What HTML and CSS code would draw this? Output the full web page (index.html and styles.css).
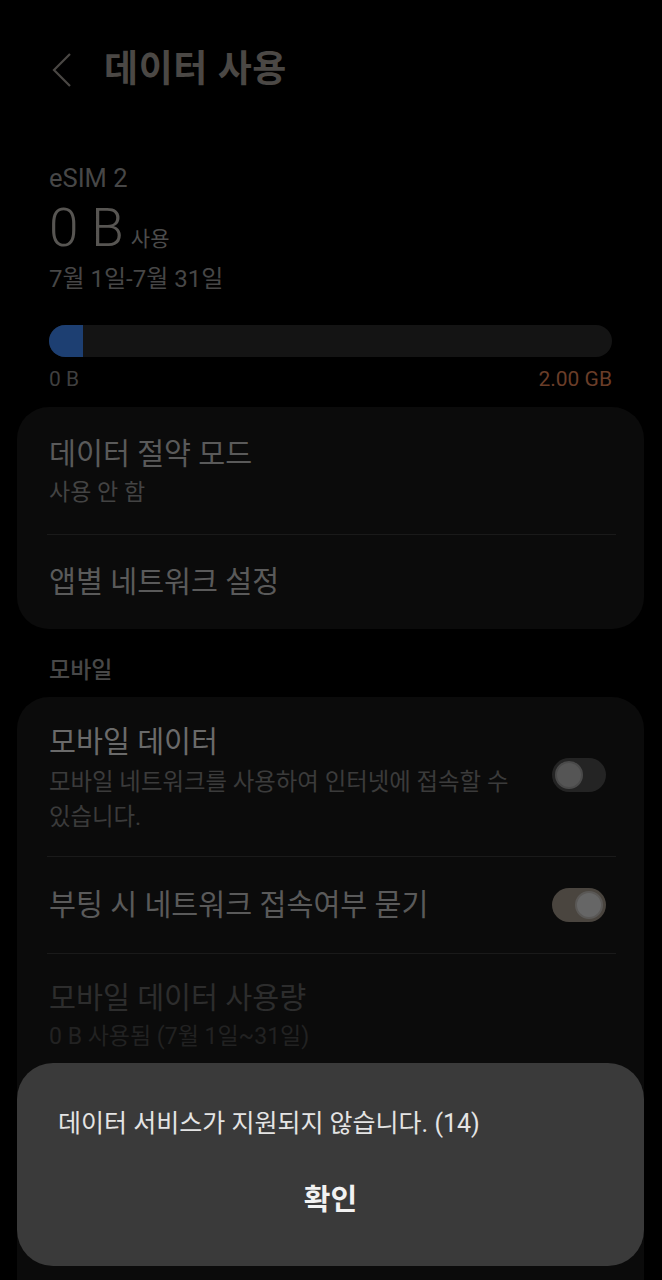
FILE: index.html
```html
<!DOCTYPE html>
<html lang="ko">
<head>
<meta charset="utf-8">
<title>데이터 사용</title>
<link rel="stylesheet" href="styles.css">
</head>
<body>
<div class="screen">
  <header class="appbar">
    <svg class="back" width="24" height="36" viewBox="0 0 24 36">
      <polyline points="19,2 3,18 19,34" fill="none" stroke="#4a4744" stroke-width="2.2" stroke-linejoin="miter"/>
    </svg>
    <h1 class="title">데이터 사용</h1>
  </header>

  <section class="usage">
    <div class="esim">eSIM 2</div>
    <div class="total"><span class="total-num">0 B</span><span class="total-unit">사용</span></div>
    <div class="period">7월 1일-7월 31일</div>
    <div class="bar"><div class="bar-fill" style="width: 34px"></div></div>
    <div class="bar-labels"><span>0 B</span><span class="limit">2.00 GB</span></div>
  </section>

  <section class="card">
    <div class="item item-first">
      <div class="item-title">데이터 절약 모드</div>
      <div class="item-sub">사용 안 함</div>
    </div>
    <div class="divider"></div>
    <div class="item item-single">
      <div class="item-title">앱별 네트워크 설정</div>
    </div>
  </section>

  <div class="section-label">모바일</div>

  <section class="card card-mobile">
    <div class="item item-toggle item-mdata">
      <div class="item-text">
        <div class="item-title bright">모바일 데이터</div>
        <div class="item-desc">모바일 네트워크를 사용하여 인터넷에 접속할 수 있습니다.</div>
      </div>
      <div class="switch switch-off"><span class="knob"></span></div>
    </div>
    <div class="divider"></div>
    <div class="item item-toggle item-boot">
      <div class="item-text">
        <div class="item-title">부팅 시 네트워크 접속여부 묻기</div>
      </div>
      <div class="switch switch-on"><span class="knob"></span></div>
    </div>
    <div class="divider"></div>
    <div class="item item-usage">
      <div class="item-title disabled">모바일 데이터 사용량</div>
      <div class="item-sub disabled-sub">0 B 사용됨 (7월 1일~31일)</div>
    </div>
  </section>
</div>

<div class="dialog">
  <p class="dialog-msg">데이터 서비스가 지원되지 않습니다. (14)</p>
  <div class="dialog-btn">확인</div>
</div>
</body>
</html>
```

FILE: styles.css
```css
* { box-sizing: border-box; }
html, body {
  margin: 0;
  padding: 0;
  background: #000;
}
body {
  font-family: "Roboto", "Noto Sans CJK KR", sans-serif;
  width: 662px;
  height: 1280px;
  overflow: hidden;
}
.screen {
  padding: 0 18px 0 17px;
}
.appbar {
  height: 140px;
  display: flex;
  align-items: center;
  padding-left: 34px;
}
.back {
  display: block;
}
.title {
  margin: 0 0 0 29px;
  font-size: 37px;
  line-height: 48px;
  font-weight: 700;
  color: #4b4845;
  letter-spacing: 0.6px;
}
.usage {
  padding: 23px 32px 0 32px;
}
.esim {
  font-size: 25.5px;
  line-height: 30px;
  color: #474747;
}
.total {
  margin-top: 7px;
  height: 56px;
  display: flex;
  align-items: baseline;
  color: #575552;
}
.total-num {
  font-size: 53px;
  line-height: 56px;
  font-weight: 300;
}
.total-unit {
  font-size: 21px;
  line-height: 24px;
  margin-left: 7px;
  color: #4c4c4c;
}
.period {
  margin-top: 7px;
  font-size: 24px;
  line-height: 32px;
  color: #474747;
}
.bar {
  margin-top: 30px;
  height: 32px;
  border-radius: 16px;
  background: #141414;
  overflow: hidden;
}
.bar-fill {
  height: 100%;
  background: #1d3f72;
}
.bar-labels {
  margin-top: 9px;
  display: flex;
  justify-content: space-between;
  font-size: 21px;
  line-height: 26px;
  color: #3f3f3f;
}
.limit { color: #6a3d28; }

.card {
  margin-top: 15px;
  background: #0b0b0b;
  border-radius: 32px;
}
.item {
  padding: 0 32px;
}
.item-first {
  padding-top: 29px;
  height: 127px;
}
.item-single {
  padding-top: 29px;
  height: 94px;
}
.item-title {
  font-size: 29.3px;
  line-height: 36px;
  color: #5a5a5a;
}
.item-sub {
  margin-top: 6px;
  font-size: 23px;
  line-height: 30px;
  color: #434343;
}
.divider {
  height: 1px;
  background: #1a1a1a;
  margin: 0 28px 0 30px;
}
.section-label {
  margin-top: 27px;
  padding-left: 32px;
  font-size: 23px;
  line-height: 30px;
  font-weight: 500;
  color: #484848;
}
.card-mobile {
  margin-top: 11px;
  padding-bottom: 228px;
  border-radius: 32px 32px 0 0;
}
.item-toggle {
  display: flex;
  align-items: center;
  justify-content: space-between;
  padding-right: 38px;
}
.item-text { flex: 1; }
.item-mdata {
  padding-top: 27px;
  height: 159px;
  align-items: flex-start;
}
.item-mdata .switch { margin-top: 34px; }
.item-mdata .item-text { padding-right: 24px; }
.bright { color: #6a6a6a; }
.item-desc {
  margin-top: 5px;
  font-size: 23.4px;
  line-height: 35px;
  color: #3b3b3b;
  word-break: keep-all;
}
.item-boot {
  height: 96px;
}
.item-usage {
  padding-top: 26px;
}
.disabled { color: #2d2d2d; }
.disabled-sub { color: #222; }

.switch {
  position: relative;
  flex: none;
  width: 54px;
  height: 34px;
  border-radius: 17px;
}
.switch-off { background: #242424; }
.switch-on { background: #4a453f; }
.knob {
  position: absolute;
  top: 3px;
  width: 28px;
  height: 28px;
  border-radius: 50%;
  background: #555;
}
.switch-off .knob { left: 3px; border: 2px solid #4a4a4a; }
.switch-on .knob { right: 3px; background: #666; border: 2px solid #5a5856; }

.dialog {
  position: fixed;
  left: 17px;
  right: 18px;
  bottom: 14px;
  height: 203px;
  background: #3a3a3a;
  border-radius: 36px;
  padding: 44px 41px 0 41px;
}
.dialog-msg {
  margin: 0;
  font-size: 25px;
  line-height: 34px;
  color: #e4e4e4;
}
.dialog-btn {
  margin-top: 39px;
  text-align: center;
  font-size: 29px;
  line-height: 40px;
  font-weight: 700;
  color: #f2f2f2;
}
```
